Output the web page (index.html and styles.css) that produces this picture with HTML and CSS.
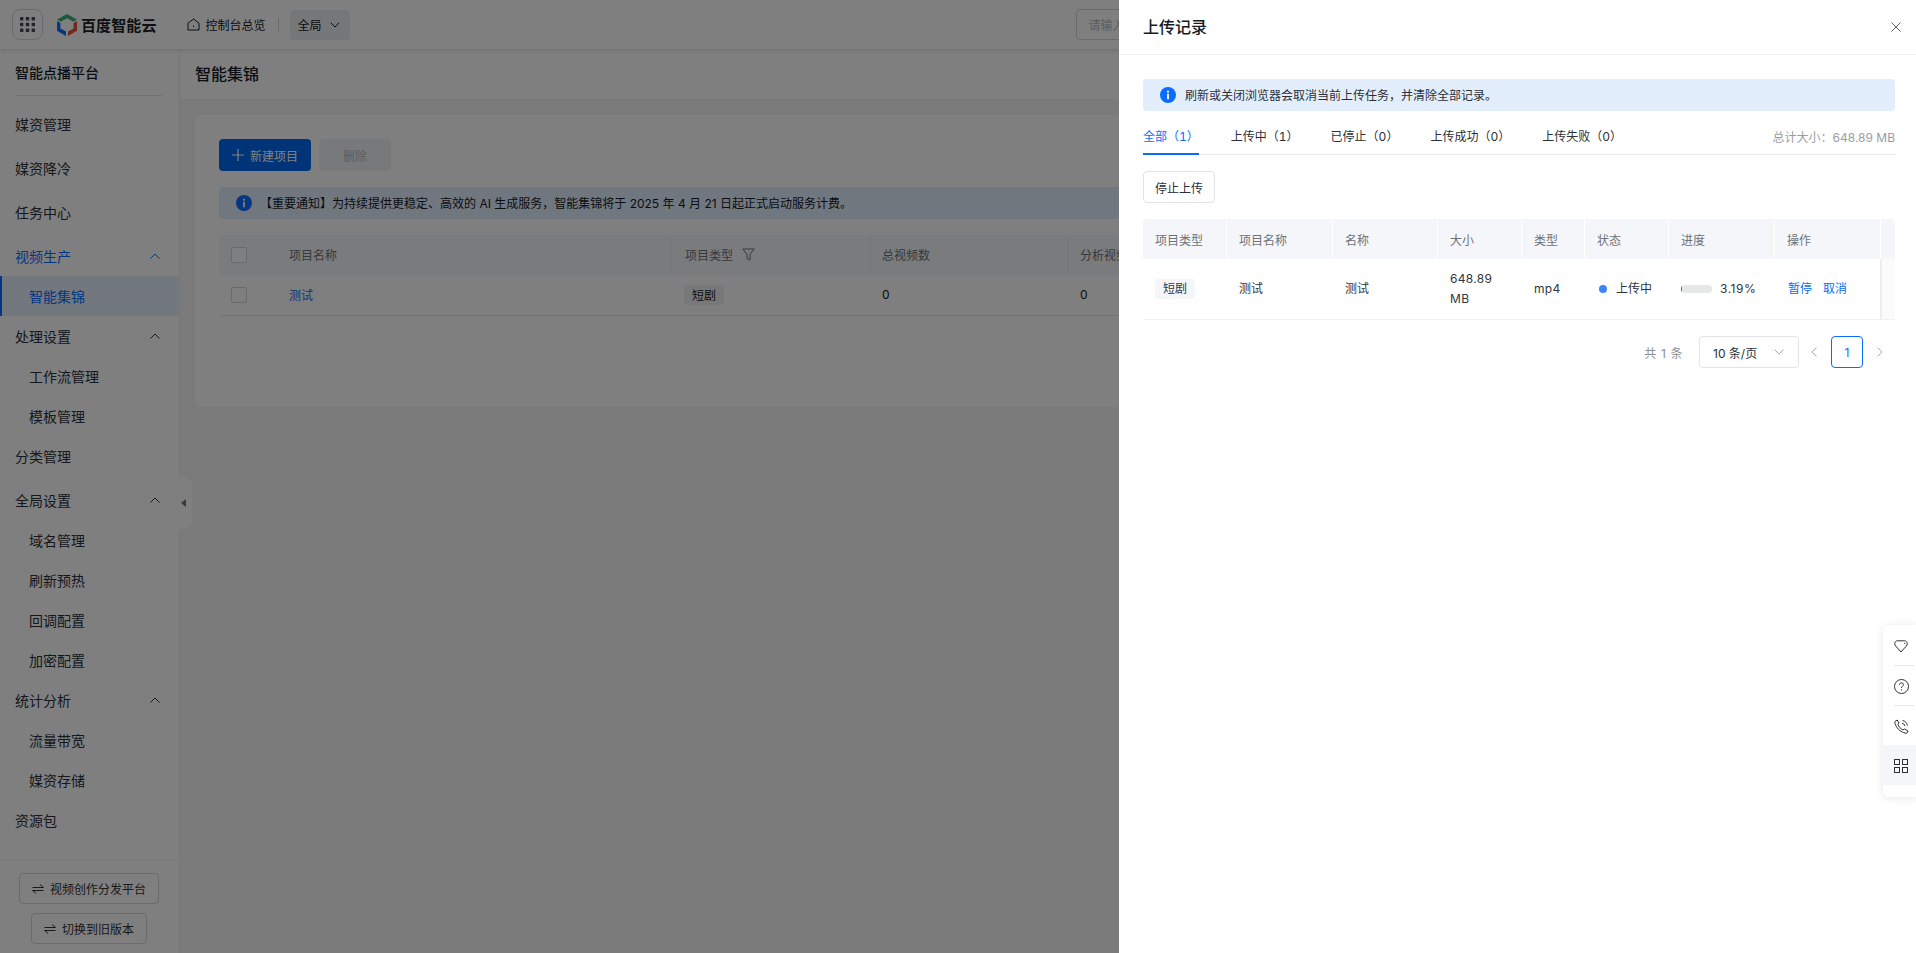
FILE: index.html
```html
<!DOCTYPE html>
<html lang="zh-CN">
<head>
<meta charset="utf-8">
<title>上传记录</title>
<link rel="stylesheet" href="styles.css">
</head>
<body>
<div class="page">
  <header class="topbar">
    <button class="apps" aria-label="apps">
      <svg width="15" height="15" viewBox="0 0 15 15" fill="currentColor"><rect x="0" y="0" width="3.4" height="3.4" rx=".6"/><rect x="5.8" y="0" width="3.4" height="3.4" rx=".6"/><rect x="11.6" y="0" width="3.4" height="3.4" rx=".6"/><rect x="0" y="5.8" width="3.4" height="3.4" rx=".6"/><rect x="5.8" y="5.8" width="3.4" height="3.4" rx=".6"/><rect x="11.6" y="5.8" width="3.4" height="3.4" rx=".6"/><rect x="0" y="11.6" width="3.4" height="3.4" rx=".6"/><rect x="5.8" y="11.6" width="3.4" height="3.4" rx=".6"/><rect x="11.6" y="11.6" width="3.4" height="3.4" rx=".6"/></svg>
    </button>
    <div class="logo">
      <svg width="20" height="22" viewBox="0 0 20 22"><path fill="#3fb27f" d="M10 0 20 5.5 16.4 7.8 10 4.2 3.6 7.8 0 5.5Z"/><path fill="#0a6cff" d="M0 7 3.4 9V14.4L9 17.6V22L0 16.8Z"/><path fill="#e5533d" d="M20 7V16.8L11 22V17.6L16.6 14.4V9Z"/></svg>
      <span class="logo-text">百度智能云</span>
    </div>
    <a class="overview">
      <svg width="13" height="13" viewBox="0 0 13 13" fill="none" stroke="currentColor" stroke-width="1"><path d="M1 5.2 6.500 1 12 5.200V12H1Z" stroke-linejoin="round"/><path d="M6.500 7.500V9"/></svg>
      <span>控制台总览</span>
    </a>
    <i class="top-divider"></i>
    <div class="scope"><span>全局</span>
      <svg width="10" height="6" viewBox="0 0 10 6" fill="none" stroke="currentColor"><path d="M.8.800 5 5 9.200.800"/></svg>
    </div>
    <div class="search">请输入</div>
  </header>

  <div class="body">
    <aside class="sidebar">
      <div class="side-title">智能点播平台</div>
      <nav class="menu">
        <a class="top">媒资管理</a>
        <a class="top">媒资降冷</a>
        <a class="top">任务中心</a>
        <a class="top open active-parent">视频生产<svg class="chev" width="10" height="6" viewBox="0 0 10 6" fill="none" stroke="currentColor"><path d="M.5 5.500 5 1 9.500 5.500"/></svg></a>
        <a class="sub active">智能集锦</a>
        <a class="top open">处理设置<svg class="chev" width="10" height="6" viewBox="0 0 10 6" fill="none" stroke="currentColor"><path d="M.5 5.500 5 1 9.500 5.500"/></svg></a>
        <a class="sub">工作流管理</a>
        <a class="sub">模板管理</a>
        <a class="top">分类管理</a>
        <a class="top open">全局设置<svg class="chev" width="10" height="6" viewBox="0 0 10 6" fill="none" stroke="currentColor"><path d="M.5 5.500 5 1 9.500 5.500"/></svg></a>
        <a class="sub">域名管理</a>
        <a class="sub">刷新预热</a>
        <a class="sub">回调配置</a>
        <a class="sub">加密配置</a>
        <a class="top open">统计分析<svg class="chev" width="10" height="6" viewBox="0 0 10 6" fill="none" stroke="currentColor"><path d="M.5 5.500 5 1 9.500 5.500"/></svg></a>
        <a class="sub">流量带宽</a>
        <a class="sub">媒资存储</a>
        <a class="top">资源包</a>
      </nav>
      <div class="side-foot">
        <button class="switch"><svg width="12" height="10" viewBox="0 0 12 10" fill="none" stroke="currentColor"><path d="M.5 3.500H11.500L8 .500M11.500 6.500H.5L4 9.500"/></svg>视频创作分发平台</button>
        <button class="switch"><svg width="12" height="10" viewBox="0 0 12 10" fill="none" stroke="currentColor"><path d="M.5 3.500H11.500L8 .500M11.500 6.500H.5L4 9.500"/></svg>切换到旧版本</button>
      </div>
      <div class="collapse"><i></i></div>
    </aside>

    <main class="main">
      <div class="main-title">智能集锦</div>
      <section class="card">
        <div class="actions">
          <button class="btn-primary"><svg width="12" height="12" viewBox="0 0 12 12" stroke="currentColor" stroke-width="1.200"><path d="M6 0V12M0 6H12"/></svg>新建项目</button>
          <button class="btn-disabled">删除</button>
        </div>
        <div class="notice">
          <svg class="info" width="16" height="16" viewBox="0 0 16 16"><circle cx="8" cy="8" r="8" fill="#0a6cff"/><rect x="7.100" y="6.800" width="1.800" height="5.500" fill="#fff"/><rect x="7.100" y="3.700" width="1.800" height="1.900" fill="#fff"/></svg>
          <span class="notice-text">【重要通知】为持续提供更稳定、高效的 AI 生成服务，智能集锦将于 2025 年 4 月 21 日起正式启动服务计费。</span>
        </div>
        <div class="grid-back head">
          <div class="check-cell"><i class="checkbox"></i></div>
          <div class="c-name">项目名称</div>
          <div class="c-type">项目类型<svg class="filter" width="13" height="13" viewBox="0 0 13 13" fill="none" stroke="currentColor"><path d="M.8 1H12.200L8 6.500V12L5 10.500V6.500Z" stroke-linejoin="round"/></svg></div>
          <div class="c-cell">总视频数</div>
          <div class="c-cell">分析视频数</div>
        </div>
        <div class="grid-back row">
          <div class="check-cell"><i class="checkbox"></i></div>
          <div class="c-name link">测试</div>
          <div class="c-type"><span class="tag back-tag">短剧</span></div>
          <div class="c-cell">0</div>
          <div class="c-cell">0</div>
        </div>
      </section>
    </main>
  </div>
</div>

<div class="mask"></div>

<aside class="drawer">
  <div class="drawer-head">
    <h2>上传记录</h2>
    <svg class="close" width="10" height="10" viewBox="0 0 10 10" fill="none" stroke="currentColor"><path d="M.5.500 9.500 9.500M9.500.500.5 9.500"/></svg>
  </div>
  <div class="drawer-body">
    <div class="drawer-alert">
      <svg class="info" width="16" height="16" viewBox="0 0 16 16"><circle cx="8" cy="8" r="8" fill="#0a6cff"/><rect x="7.100" y="6.800" width="1.800" height="5.500" fill="#fff"/><rect x="7.100" y="3.700" width="1.800" height="1.900" fill="#fff"/></svg>
      <span class="alert-text">刷新或关闭浏览器会取消当前上传任务，并清除全部记录。</span>
    </div>
    <div class="tabs">
      <a class="tab current">全部（1）</a>
      <a class="tab">上传中（1）</a>
      <a class="tab">已停止（0）</a>
      <a class="tab">上传成功（0）</a>
      <a class="tab">上传失败（0）</a>
      <span class="total">总计大小：648.89 MB</span>
    </div>
    <button class="stop">停止上传</button>
    <div class="table">
      <div class="th">项目类型</div>
      <div class="th">项目名称</div>
      <div class="th">名称</div>
      <div class="th">大小</div>
      <div class="th">类型</div>
      <div class="th">状态</div>
      <div class="th">进度</div>
      <div class="th">操作</div>
      <div class="th th-end"></div>
      <div class="td"><span class="tag">短剧</span></div>
      <div class="td">测试</div>
      <div class="td">测试</div>
      <div class="td num">648.89 MB</div>
      <div class="td num">mp4</div>
      <div class="td status"><i class="dot"></i>上传中</div>
      <div class="td progress num"><span class="bar"><i class="bar-fill"></i></span>3.19%</div>
      <div class="td ops"><a>暂停</a><a>取消</a></div>
      <div class="td td-end"></div>
    </div>
    <div class="pager">
      <span class="count">共 1 条</span>
      <div class="size"><span>10 条/页</span><svg width="10" height="6" viewBox="0 0 10 6" fill="none" stroke="currentColor"><path d="M.5.500 5 5 9.500.500"/></svg></div>
      <svg class="arrow" width="6" height="10" viewBox="0 0 6 10" fill="none" stroke="currentColor"><path d="M5.500.500 1 5 5.500 9.500"/></svg>
      <span class="page-no">1</span>
      <svg class="arrow" width="6" height="10" viewBox="0 0 6 10" fill="none" stroke="currentColor"><path d="M.5.500 5 5 .5 9.500"/></svg>
    </div>
  </div>
</aside>

<div class="float-tools">
  <div class="tool">
    <svg width="14" height="13" viewBox="0 0 14 13" fill="none" stroke="currentColor"><path d="M3.500 .8H10.500C12.300.8 13.300 2.300 13.300 3.700 13.300 4.600 12.900 5.400 12.300 6L7 12 1.700 6C1.100 5.400.7 4.600.7 3.700.7 2.300 1.700.8 3.500.8Z" stroke-linejoin="round"/><path d="M10 3C10.600 3.100 11 3.500 11.100 4"/></svg>
  </div>
  <i class="tool-sep"></i>
  <div class="tool">
    <svg width="15" height="15" viewBox="0 0 15 15" fill="none" stroke="currentColor"><circle cx="7.500" cy="7.500" r="7"/><path d="M5.500 5.800C5.500 4.600 6.400 3.900 7.500 3.900S9.500 4.600 9.500 5.700C9.500 7.100 7.500 7.200 7.500 8.900"/><path d="M7.500 10.300V11.300"/></svg>
  </div>
  <i class="tool-sep"></i>
  <div class="tool">
    <svg width="15" height="15" viewBox="0 0 15 15" fill="none" stroke="currentColor"><path d="M1 2.500 3.200 1 5 4 3.900 5.200C4.600 7.500 6.500 9.800 9 11L10.400 9.900 14 12 13.600 13.400C13.300 14 12.700 14.300 12 14.200 6 13.200 1.800 8.500.8 3.500.7 3.100.8 2.700 1 2.500Z" stroke-linejoin="round"/><path d="M8 4.200C9.500 4.400 10.600 5.500 10.800 7M8.500 1.500C11 1.900 13 3.900 13.400 6.500"/></svg>
  </div>
  <div class="tool tool-active">
    <svg width="14" height="14" viewBox="0 0 14 14" fill="none" stroke="currentColor"><rect x=".5" y=".5" width="5" height="5"/><rect x="8.500" y=".5" width="5" height="5"/><rect x=".5" y="8.500" width="5" height="5"/><rect x="8.500" y="8.500" width="5" height="5"/></svg>
  </div>
</div>
</body>
</html>
```
FILE: styles.css
```css
* { box-sizing: border-box; }
html, body { margin: 0; height: 100%; overflow: hidden; }
body {
  font-family: Inter, "Noto Sans CJK SC", "Noto Sans", sans-serif;
  font-size: 12px;
  color: #151b26;
  background: #f5f5f5;
}
a { color: inherit; text-decoration: none; }
button { font: inherit; color: inherit; background: none; cursor: pointer; }
i { display: block; font-style: normal; }

.page { height: 953px; display: flex; flex-direction: column; }

/* top bar */
.topbar {
  height: 49px;
  flex: none;
  display: flex;
  align-items: center;
  padding-left: 12px;
  background: #fff;
  box-shadow: 0 1px 5px rgba(0, 0, 0, .16);
  z-index: 2;
}
.apps {
  width: 31px;
  height: 31px;
  padding: 0;
  display: flex;
  align-items: center;
  justify-content: center;
  border: 1px solid #d4d6d9;
  border-radius: 8px;
  color: #484b53;
}
.logo { display: flex; align-items: center; gap: 4px; margin-left: 14px; }
.logo-text { font-size: 15px; font-weight: 700; letter-spacing: .1px; color: #1c1f26; white-space: nowrap; }
.overview { display: flex; align-items: center; gap: 6px; margin-left: 30px; }
.top-divider { width: 1px; height: 13px; background: #d4d6d9; margin: 0 11px 0 12px; }
.scope {
  width: 60px;
  height: 30px;
  display: flex;
  align-items: center;
  gap: 8px;
  padding-left: 8px;
  border-radius: 4px;
  background: #eceef1;
}
.search {
  width: 300px;
  height: 31px;
  margin-left: 726px;
  display: flex;
  align-items: center;
  padding-left: 12px;
  border: 1px solid #d4d6d9;
  border-radius: 4px;
  color: #b8babf;
}

.body { flex: 1; display: flex; min-height: 0; }

/* sidebar */
.sidebar {
  width: 180px;
  flex: none;
  display: flex;
  flex-direction: column;
  background: #fff;
  border-right: 1px solid #eceef1;
  position: relative;
  z-index: 1;
}
.side-title {
  height: 47px;
  margin: 0 16px 0 15px;
  display: flex;
  align-items: center;
  font-size: 14px;
  font-weight: 500;
  border-bottom: 1px solid #e4e6ea;
}
.menu { flex: 1; display: flex; flex-direction: column; padding-top: 8px; font-size: 14px; color: #2c3038; }
.menu a { height: 40px; flex: none; display: flex; align-items: center; }
.top { padding: 0 19px 0 15px; justify-content: space-between; }
.top + .top { margin-top: 4px; }
.sub { padding-left: 29px; }
.active-parent { color: #0a6cff; }
.menu a.active {
  color: #0a6cff;
  background: #e6f0ff;
  border-left: 2px solid #0a6cff;
  padding-left: 27px;
}
.side-foot {
  height: 93px;
  flex: none;
  display: flex;
  flex-direction: column;
  align-items: center;
  gap: 9px;
  padding: 12px 1px 0 0;
  background: #fff;
  border-top: 1px solid #f3f4f6;
}
.switch {
  height: 31px;
  display: flex;
  align-items: center;
  gap: 6px;
  padding: 0 12px;
  border: 1px solid #d4d6d9;
  border-radius: 4px;
  color: #333;
}
.collapse {
  position: absolute;
  left: 179px;
  top: 428px;
  width: 13px;
  height: 52px;
  display: flex;
  align-items: center;
  background: #fff;
  border-radius: 0 8px 8px 0;
}
.collapse i {
  margin-left: 2px;
  border-style: solid;
  border-width: 4px 5px 4px 0;
  border-color: transparent #70737a transparent transparent;
}

/* main */
.main { flex: 1; min-width: 0; }
.main-title {
  height: 50px;
  display: flex;
  align-items: center;
  padding: 0 0 2px 15px;
  font-size: 16px;
  font-weight: 500;
  background: #fff;
}
.card {
  margin: 16px 16px 0 15px;
  height: 292px;
  padding: 24px;
  background: #fff;
  border-radius: 6px;
}
.actions { display: flex; gap: 8px; }
.btn-primary {
  width: 92px;
  height: 32px;
  padding: 0;
  display: flex;
  align-items: center;
  justify-content: center;
  gap: 6px;
  border: 0;
  border-radius: 4px;
  background: #0068f0;
  color: #fff;
}
.btn-disabled {
  width: 72px;
  height: 32px;
  border: 0;
  border-radius: 4px;
  background: #f1f2f4;
  color: #b8babf;
}
.notice {
  height: 32px;
  margin-top: 16px;
  display: flex;
  align-items: center;
  gap: 8px;
  padding-left: 17px;
  border-radius: 4px;
  background: #e3eeff;
}
.notice-text { padding-bottom: 2px; }
.grid-back {
  display: grid;
  grid-template-columns: 58px 394px 199px 198px 1fr;
}
.grid-back.head { height: 40px; margin-top: 16px; background: #f5f6f9; color: #6f7278; border-radius: 4px 4px 0 0; }
.grid-back.row { height: 41px; padding-bottom: 1px; border-bottom: 1px solid #e8e9eb; }
.grid-back > div { display: flex; align-items: center; padding-left: 12px; }
.grid-back.head > .c-name, .grid-back.head > .c-type, .grid-back.head > .c-cell { padding-bottom: 2px; }
.grid-back.head > .c-type { border-left: 1px solid #eceef1; padding-left: 13px; }
.grid-back.head > .c-cell { border-left: 1px solid #eceef1; padding-left: 11px; }
.grid-back.row > .c-type { padding-left: 13px; }
.check-cell { padding-left: 12px; }
.checkbox { width: 16px; height: 16px; border: 1px solid #d4d6d9; border-radius: 2px; background: #fff; }
.link { color: #0a6cff; }
.filter { margin-left: 9px; }
.tag {
  display: inline-flex;
  align-items: center;
  justify-content: center;
  width: 40px;
  height: 20px;
  border-radius: 2px;
  background: #f5f6f9;
}
.back-tag { background: #eef0f3; }

/* overlay */
.mask { position: fixed; inset: 0; background: rgba(0, 0, 0, .5); z-index: 5; }

/* drawer */
.drawer {
  position: fixed;
  top: 0;
  right: 0;
  bottom: 0;
  width: 797px;
  background: #fff;
  z-index: 6;
  display: flex;
  flex-direction: column;
}
.drawer-head {
  height: 55px;
  flex: none;
  display: flex;
  align-items: center;
  justify-content: space-between;
  padding: 0 15px 1px 24px;
  border-bottom: 1px solid #eff0f2;
}
.drawer-head h2 { margin: 0 0 2px; font-size: 16px; font-weight: 500; color: #151b26; }
.close { color: #5c5f66; }
.drawer-body { padding: 24px 21px 0 24px; display: flex; flex-direction: column; }
.drawer-alert {
  height: 32px;
  display: flex;
  align-items: center;
  gap: 9px;
  padding-left: 17px;
  border-radius: 4px;
  background: #e3eefc;
  color: #2c3038;
}
.alert-text { padding-bottom: 2px; }
.tabs {
  height: 44px;
  display: flex;
  align-items: flex-end;
  gap: 32px;
  border-bottom: 1px solid #e6e7e9;
  color: #2c3038;
}
.tab {
  height: 33px;
  line-height: 29px;
  flex: none;
  border-bottom: 2px solid transparent;
  margin-bottom: -1px;
  white-space: nowrap;
  font-variant-numeric: tabular-nums;
}
.tab.current { color: #0a6cff; border-bottom-color: #0a6cff; }
.total { margin-left: auto; align-self: flex-end; height: 33px; line-height: 33px; color: #9a9da3; white-space: nowrap; }
.stop {
  width: 72px;
  height: 32px;
  margin-top: 16px;
  padding: 0;
  border: 1px solid #e2e3e6;
  border-radius: 4px;
  background: #fff;
  color: #2c3038;
}
.table {
  margin-top: 16px;
  display: grid;
  grid-template-columns: 84px 106px 105px 84px 63px 84px 106px 106px 14px;
  grid-template-rows: 40px 61px;
}
.th {
  display: flex;
  align-items: center;
  padding-left: 12px;
  background: #f5f6f9;
  color: #6f7278;
  border-right: 1px solid #fff;
}
.th:first-child { border-radius: 4px 0 0 0; }
.th-end { border-right: 0; border-radius: 0 4px 0 0; padding: 0; }
.td {
  display: flex;
  align-items: center;
  padding: 0 12px 1px;
  line-height: 20px;
  color: #303540;
  border-bottom: 1px solid #eff0f2;
}
.num { letter-spacing: .3px; }
.status { gap: 9px; padding-left: 14px; padding-right: 0; white-space: nowrap; }
.dot { width: 8px; height: 8px; border-radius: 50%; background: #3b86f7; flex: none; }
.progress { gap: 8px; padding: 0 0 0 12px; white-space: nowrap; letter-spacing: .5px; }
.bar { width: 31px; height: 8px; border-radius: 4px; background: #e6e7e9; overflow: hidden; flex: none; }
.bar-fill { width: 1px; height: 8px; background: #0a6cff; }
.ops { gap: 11px; padding-left: 13px; color: #0a6cff; white-space: nowrap; }
.td-end { padding: 0; margin-left: -1px; border-left: 2px solid #eceef1; background: #fbfbfc; }
.pager { display: flex; align-items: center; justify-content: flex-end; height: 32px; margin-top: 16px; padding-right: 12px; }
.count { color: #8b8e94; margin-right: 16px; letter-spacing: .6px; }
.size {
  width: 100px;
  height: 32px;
  display: flex;
  align-items: center;
  justify-content: space-between;
  padding: 0 14px 0 13px;
  border: 1px solid #e2e3e6;
  border-radius: 4px;
  color: #2c3038;
}
.size svg { color: #a8abb0; }
.arrow { color: #a8abb0; margin: 0 14px 0 12px; }
.arrow:last-child { margin: 0 0 0 14px; }
.page-no {
  width: 32px;
  height: 32px;
  display: flex;
  align-items: center;
  justify-content: center;
  border: 1px solid #0a6cff;
  border-radius: 4px;
  color: #0a6cff;
}

/* floating toolbar */
.float-tools {
  position: fixed;
  right: 0;
  top: 625px;
  width: 33px;
  height: 172px;
  padding-top: 1px;
  background: #fff;
  border-radius: 6px 0 0 6px;
  box-shadow: 0 1px 8px rgba(0, 0, 0, .1);
  z-index: 7;
  display: flex;
  flex-direction: column;
  align-items: center;
}
.tool { width: 33px; height: 39px; padding: 2px 0 0 3px; display: flex; align-items: center; justify-content: center; color: #2c3038; flex: none; }
.tool-sep { width: 20px; height: 1px; background: #e6e7e9; margin-left: 8px; flex: none; }
.tool-active { height: 40px; background: #f5f6f9; }
```
